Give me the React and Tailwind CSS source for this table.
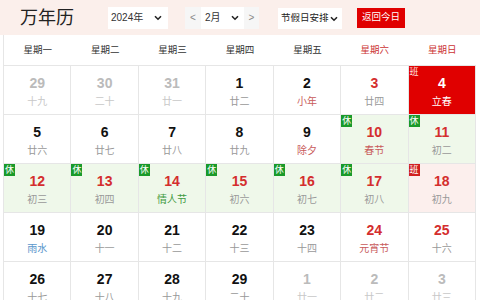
import React from "react";

const weekdays = ["星期一", "星期二", "星期三", "星期四", "星期五", "星期六", "星期日"];

// type: o = other month, n = normal, w = weekend
const days = [
  { d: 29, l: "十九", t: "o" },
  { d: 30, l: "二十", t: "o" },
  { d: 31, l: "廿一", t: "o" },
  { d: 1, l: "廿二", t: "n" },
  { d: 2, l: "小年", t: "n", lc: "text-[#c85a5a]" },
  { d: 3, l: "廿四", t: "w" },
  { d: 4, l: "立春", t: "today", badge: "班" },
  { d: 5, l: "廿六", t: "n" },
  { d: 6, l: "廿七", t: "n" },
  { d: 7, l: "廿八", t: "n" },
  { d: 8, l: "廿九", t: "n" },
  { d: 9, l: "除夕", t: "n", lc: "text-[#c85a5a]" },
  { d: 10, l: "春节", t: "w", bg: "rest", badge: "休", lc: "text-[#c85a5a]" },
  { d: 11, l: "初二", t: "w", bg: "rest", badge: "休" },
  { d: 12, l: "初三", t: "w", bg: "rest", badge: "休" },
  { d: 13, l: "初四", t: "w", bg: "rest", badge: "休" },
  { d: 14, l: "情人节", t: "w", bg: "rest", badge: "休", lc: "text-[#3f9a3f]" },
  { d: 15, l: "初六", t: "w", bg: "rest", badge: "休" },
  { d: 16, l: "初七", t: "w", bg: "rest", badge: "休" },
  { d: 17, l: "初八", t: "w", bg: "rest", badge: "休" },
  { d: 18, l: "初九", t: "w", bg: "work", badge: "班" },
  { d: 19, l: "雨水", t: "n", lc: "text-[#5b97cc]" },
  { d: 20, l: "十一", t: "n" },
  { d: 21, l: "十二", t: "n" },
  { d: 22, l: "十三", t: "n" },
  { d: 23, l: "十四", t: "n" },
  { d: 24, l: "元宵节", t: "w", lc: "text-[#c85a5a]" },
  { d: 25, l: "十六", t: "w" },
  { d: 26, l: "十七", t: "n" },
  { d: 27, l: "十八", t: "n" },
  { d: 28, l: "十九", t: "n" },
  { d: 29, l: "二十", t: "n" },
  { d: 1, l: "廿一", t: "o" },
  { d: 2, l: "廿二", t: "o" },
  { d: 3, l: "廿三", t: "o" },
];

const Chevron = () => (
  <svg width="8" height="6" viewBox="0 0 8 6" className="ml-auto shrink-0">
    <path d="M1 1.2l3 3 3-3" fill="none" stroke="#222" strokeWidth="1.6" />
  </svg>
);

const Cell = ({ day }) => {
  let bg = "bg-white";
  if (day.t === "today") bg = "bg-[#e00000]";
  else if (day.bg === "rest") bg = "bg-[#eff8ea]";
  else if (day.bg === "work") bg = "bg-[#fcefed]";

  let num = "text-[#111]";
  if (day.t === "o") num = "text-[#bbbbbb]";
  else if (day.t === "w") num = "text-[#d42e2e]";
  else if (day.t === "today") num = "text-white";

  let lunar = day.lc || "text-[#999]";
  if (day.t === "o") lunar = "text-[#c8c8c8]";
  if (day.t === "today") lunar = "text-white";

  let badge = null;
  if (day.badge === "休") {
    badge = (
      <span className="absolute left-0 top-0 w-[11px] h-[12px] bg-[#1a9a2a] text-white text-[9px] leading-[12px] text-center">
        休
      </span>
    );
  } else if (day.badge === "班") {
    badge = (
      <span
        className={
          "absolute left-0 top-0 w-[11px] h-[12px] text-[9px] leading-[12px] text-center " +
          (day.t === "today" ? "text-[#ffe0e0]" : "bg-[#d02020] text-white")
        }
      >
        班
      </span>
    );
  }

  return (
    <div className={"relative h-[49px] border-r border-b border-[#e6e6e6] flex flex-col items-center pt-[7px] " + bg}>
      {badge}
      <span className={"text-[14px] font-bold leading-[20px] " + num}>{day.d}</span>
      <span className={"text-[10px] leading-[16px] mt-[1px] " + lunar}>{day.l}</span>
    </div>
  );
};

export default function App() {
  return (
    <div
      className="w-[480px] h-[300px] overflow-hidden bg-white"
      style={{ fontFamily: '"Liberation Sans", "Noto Sans CJK SC", sans-serif' }}
    >
      <div className="h-[35px] bg-[#fbefeb] flex items-center pl-[20px] whitespace-nowrap">
        <span className="text-[18px] text-[#222] leading-none">万年历</span>
        <div className="ml-[34px] w-[60px] h-[22px] bg-white flex items-center pl-[3px] pr-[6px] text-[10px] text-[#333]">
          2024年
          <Chevron />
        </div>
        <div className="ml-[17px] flex items-center h-[22px] text-[10px] text-[#333]">
          <span className="w-[16px] h-full bg-[#f6f6f6] flex items-center justify-center text-[#888]">&lt;</span>
          <div className="w-[43px] h-full bg-white flex items-center pl-[4px] pr-[5px]">
            2月
            <Chevron />
          </div>
          <span className="w-[15px] h-full bg-[#f6f6f6] flex items-center justify-center text-[#888]">&gt;</span>
        </div>
        <div className="ml-[19px] w-[64px] h-[21px] mt-[2px] bg-white flex items-center pl-[3px] pr-[4px] text-[9.5px] text-[#222]">
          节假日安排
          <Chevron />
        </div>
        <div className="ml-[15px] w-[48px] h-[20px] bg-[#e00000] text-white text-[9.5px] flex items-center justify-center">
          返回今日
        </div>
      </div>
      <div className="ml-[3px] w-[473px] border-l border-[#e6e6e6]">
        <div className="grid grid-cols-7 h-[31px] border-b border-[#e6e6e6]">
          {weekdays.map((w, i) => (
            <div
              key={w}
              className={
                "flex items-center justify-center text-[9.5px] " +
                (i >= 5 ? "text-[#c33]" : "text-[#333]")
              }
            >
              {w}
            </div>
          ))}
        </div>
        <div className="grid grid-cols-7">
          {days.map((day, i) => (
            <Cell key={i} day={day} />
          ))}
        </div>
      </div>
    </div>
  );
}
